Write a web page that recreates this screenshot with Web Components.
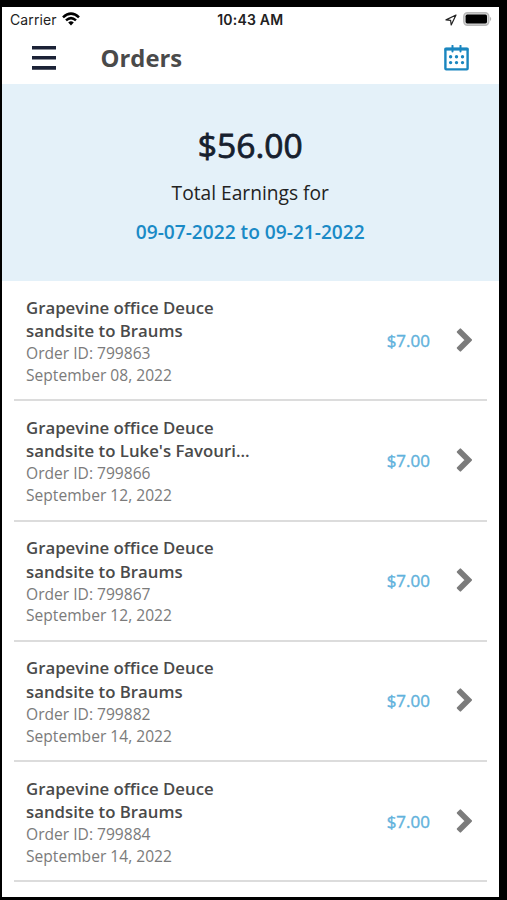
<!DOCTYPE html>
<html lang="en">
<head>
<meta charset="utf-8">
<meta name="viewport" content="width=device-width, initial-scale=1">
<title>Orders</title>
<style>
  html, body {
    margin: 0;
    height: 100%;
    overflow: hidden;
    background: #000;
    font-family: "Open Sans", "Noto Sans", sans-serif;
  }
</style>
</head>
<body>
<phone-screen>
  <status-bar carrier="Carrier" time="10:43 AM"></status-bar>
  <app-header>Orders</app-header>
  <earnings-summary amount="$56.00" range="09-07-2022 to 09-21-2022">Total Earnings for</earnings-summary>
  <order-item order-id="799863" date="September 08, 2022" price="$7.00">Grapevine office Deuce<br>sandsite to Braums</order-item>
  <order-item order-id="799866" date="September 12, 2022" price="$7.00">Grapevine office Deuce<br>sandsite to Luke's Favouri...</order-item>
  <order-item order-id="799867" date="September 12, 2022" price="$7.00">Grapevine office Deuce<br>sandsite to Braums</order-item>
  <order-item order-id="799882" date="September 14, 2022" price="$7.00">Grapevine office Deuce<br>sandsite to Braums</order-item>
  <order-item order-id="799884" date="September 14, 2022" price="$7.00">Grapevine office Deuce<br>sandsite to Braums</order-item>
</phone-screen>

<script>
class PhoneScreen extends HTMLElement {
  constructor() {
    super();
    this.attachShadow({ mode: "open" });
    this.shadowRoot.innerHTML = `
      <style>
        :host {
          display: block;
          box-sizing: border-box;
          height: 100vh;
          padding: 7px 8.5px 3px 2px;
          background: #000;
        }
        .screen {
          display: flex;
          flex-direction: column;
          height: 100%;
          overflow: hidden;
          background: #fff;
        }
      </style>
      <div class="screen"><slot></slot></div>
    `;
  }
}

class StatusBar extends HTMLElement {
  constructor() {
    super();
    this.attachShadow({ mode: "open" });
  }

  connectedCallback() {
    this.shadowRoot.innerHTML = `
      <style>
        :host {
          display: grid;
          grid-template-columns: 1fr auto 1fr;
          align-items: center;
          flex: none;
          height: 25px;
          padding: 0 7px 0 8px;
          font: 14px/25px Inter, "Liberation Sans", sans-serif;
          color: #222;
        }
        .left, .right {
          display: flex;
          align-items: center;
        }
        .left { gap: 5px; }
        .right { justify-content: flex-end; gap: 6px; }
        .carrier { letter-spacing: 0.1px; }
        .time { font-weight: 600; letter-spacing: 0.2px; margin-left: -1px; }
        svg { display: block; }
        .wifi { margin-top: -2px; }
      </style>
      <div class="left">
        <span class="carrier"></span>
        <svg class="wifi" width="18" height="14" viewBox="0 0 18 14" fill="none" stroke="#000" stroke-width="2.5">
          <path d="M1 5.4 Q9 -2.2 17 5.4"/>
          <path d="M4 8.4 Q9 3.8 14 8.4"/>
          <path d="M6.2 10.5 Q9 8 11.8 10.5 L9 13.4 Z" fill="#000" stroke="none"/>
        </svg>
      </div>
      <span class="time"></span>
      <div class="right">
        <svg width="12" height="12" viewBox="0 0 12 12" fill="none" stroke="#222" stroke-width="1.2" stroke-linejoin="round">
          <path d="M11 1 L1 5.9 L5.6 6.3 L6.2 11 Z"/>
        </svg>
        <svg width="29" height="14" viewBox="0 0 29 14" style="margin-top: -1px">
          <rect x="0.8" y="0.8" width="25" height="12.4" rx="3.6" fill="#d8d8d8" stroke="#b8b8b8" stroke-width="1.4"/>
          <rect x="2.6" y="2.6" width="21.4" height="8.8" rx="1.6" fill="#000"/>
          <path d="M27.2 4.8 Q29.2 7 27.2 9.2 Z" fill="#aaa"/>
        </svg>
      </div>
    `;
    this.shadowRoot.querySelector(".carrier").textContent = this.getAttribute("carrier");
    this.shadowRoot.querySelector(".time").textContent = this.getAttribute("time");
  }
}

class AppHeader extends HTMLElement {
  constructor() {
    super();
    this.attachShadow({ mode: "open" });
    this.shadowRoot.innerHTML = `
      <style>
        :host {
          display: flex;
          align-items: center;
          flex: none;
          box-sizing: border-box;
          height: 52px;
          padding: 0 28.5px 0 29.8px;
        }
        .menu {
          display: block;
          margin-right: 44.4px;
        }
        h1 {
          flex: 1;
          margin: 0;
          font-size: 23.8px;
          font-weight: 700;
          line-height: 32px;
          color: #4a4a4a;
        }
        svg { display: block; }
      </style>
      <svg class="menu" width="24.4" height="26" viewBox="0 0 24.4 26" stroke="#1b2236" stroke-width="3.6">
        <path d="M0 2.7H24.4M0 12.8H24.4M0 22.9H24.4"/>
      </svg>
      <h1><slot></slot></h1>
      <svg width="27" height="26" viewBox="0 0 27 26" fill="none" stroke="#1a86bf">
        <rect x="2.4" y="3.6" width="22.2" height="20.8" rx="0.8" stroke-width="2.4"/>
        <path d="M1.6 4.2H25.4" stroke-width="2.8"/>
        <path d="M9.5 0.8V6.6M17.5 0.8V6.6" stroke-width="2" stroke-linecap="round"/>
        <path d="M7.6 11.7h.01M13.5 11.7h.01M19.5 11.7h.01M7.6 17.6h.01M13.5 17.6h.01M19.5 17.6h.01" stroke-width="3.4" stroke-linecap="round"/>
      </svg>
    `;
  }
}

class EarningsSummary extends HTMLElement {
  constructor() {
    super();
    this.attachShadow({ mode: "open" });
  }

  connectedCallback() {
    this.shadowRoot.innerHTML = `
      <style>
        :host {
          display: block;
          flex: none;
          box-sizing: border-box;
          height: 197.3px;
          padding-top: 38px;
          background: #e4f1f9;
          text-align: center;
        }
        .amount {
          font-size: 33.6px;
          font-weight: 400;
          -webkit-text-stroke: 0.8px #16202e;
          line-height: 46px;
          color: #16202e;
        }
        .label {
          margin-top: 12px;
          font-size: 19.2px;
          line-height: 26px;
          color: #222;
        }
        .range {
          margin-top: 13px;
          font-size: 19.15px;
          font-weight: 600;
          line-height: 26px;
          color: #1a8ac6;
        }
      </style>
      <div class="amount"></div>
      <div class="label"><slot></slot></div>
      <div class="range"></div>
    `;
    this.shadowRoot.querySelector(".amount").textContent = this.getAttribute("amount");
    this.shadowRoot.querySelector(".range").textContent = this.getAttribute("range");
  }
}

class OrderItem extends HTMLElement {
  constructor() {
    super();
    this.attachShadow({ mode: "open" });
  }

  connectedCallback() {
    this.shadowRoot.innerHTML = `
      <style>
        :host {
          display: flex;
          flex: none;
          box-sizing: border-box;
          height: 120.2px;
          margin: 0 11.5px 0 12px;
          padding: 14.6px 14px 0 12px;
          border-bottom: 2px solid #dcdcdc;
        }
        .info { flex: 1; }
        .title {
          font-size: 16.8px;
          font-weight: 600;
          line-height: 23.3px;
          color: #4a4a4a;
          white-space: nowrap;
        }
        .meta {
          font-size: 15.6px;
          line-height: 21.9px;
          color: #7b7b7b;
        }
        .id { margin-top: 0.7px; }
        .side {
          display: flex;
          align-items: center;
          gap: 26px;
          height: 88px;
        }
        .price {
          font-size: 17px;
          font-weight: 400;
          -webkit-text-stroke: 0.4px #62b2dc;
          line-height: 24px;
          color: #62b2dc;
          margin-top: 2px;
        }
        svg { display: block; }
      </style>
      <div class="info">
        <div class="title"><slot></slot></div>
        <div class="meta id"></div>
        <div class="meta date"></div>
      </div>
      <div class="side">
        <span class="price"></span>
        <svg width="17" height="24" viewBox="0 0 17 24" fill="#7c7c7c" stroke="#7c7c7c" stroke-width="2" stroke-linejoin="round">
          <path d="M4.4 1.4 L15 12 L4.4 22.6 L1.8 20 L9.8 12 L1.8 4 Z"/>
        </svg>
      </div>
    `;
    this.shadowRoot.querySelector(".id").textContent = `Order ID: ${this.getAttribute("order-id")}`;
    this.shadowRoot.querySelector(".date").textContent = this.getAttribute("date");
    this.shadowRoot.querySelector(".price").textContent = this.getAttribute("price");
  }
}

customElements.define("phone-screen", PhoneScreen);
customElements.define("status-bar", StatusBar);
customElements.define("app-header", AppHeader);
customElements.define("earnings-summary", EarningsSummary);
customElements.define("order-item", OrderItem);
</script>
</body>
</html>
